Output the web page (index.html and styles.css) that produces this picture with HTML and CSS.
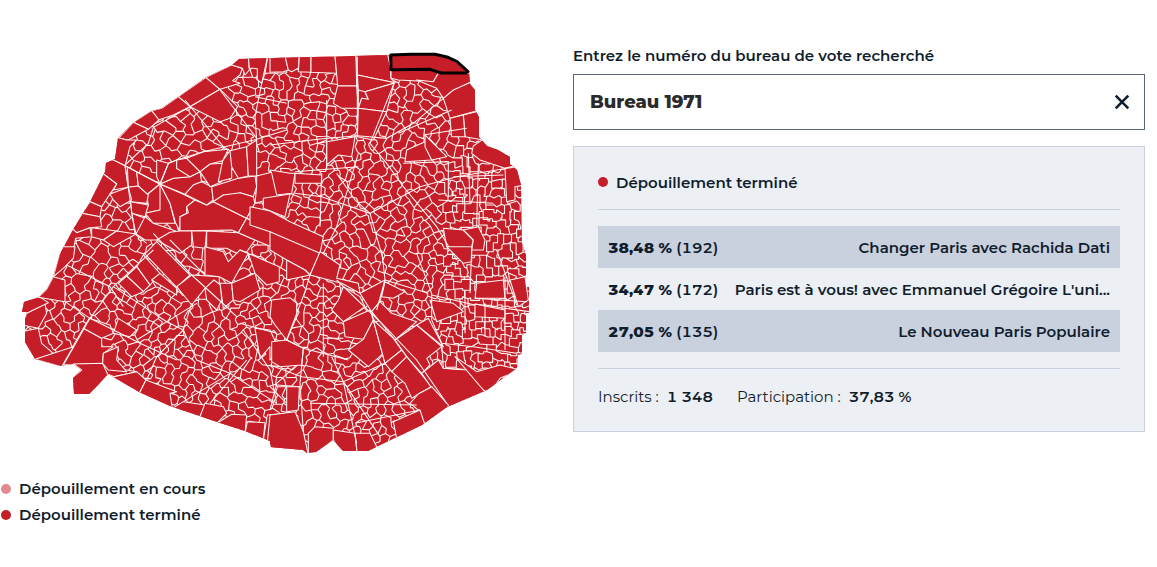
FILE: index.html
```html
<!DOCTYPE html>
<html lang="fr">
<head>
<meta charset="utf-8">
<title>Bureaux de vote</title>
<link rel="stylesheet" href="styles.css">
</head>
<body>
<main class="layout">
  <section class="map-column">
    <svg class="map" viewBox="0 0 540 470" aria-label="Carte des bureaux de vote de Paris">
      <defs><clipPath id="city"><path id="outline"/></clipPath></defs>
      <path id="land" class="land"/>
      <g clip-path="url(#city)">
        <path id="mesh" class="border"/>
        <g id="blocks"></g>
      </g>
      <path class="selected" d="M390.8 55 411 54.3 435 54.3 448 57.3 457 61.5 468 71.5 466 73 441 73 430 69.3 391 69.7Z"/>
    </svg>
    <ul class="legend">
      <li class="status"><i class="dot dot-light"></i><span>Dépouillement en cours</span></li>
      <li class="status"><i class="dot"></i><span>Dépouillement terminé</span></li>
    </ul>
  </section>
  <section class="panel">
    <label class="label" for="bureau">Entrez le numéro du bureau de vote recherché</label>
    <div class="field">
      <span class="value" id="bureau">Bureau 1971</span>
      <svg class="close" viewBox="0 0 16 16"><path d="M1.7 1.7 14.3 14.3M14.3 1.7 1.7 14.3"/></svg>
    </div>
    <div class="card">
      <div class="status head"><i class="dot"></i><span>Dépouillement terminé</span></div>
      <ul class="results">
        <li class="row"><span class="score"><b>38,48 %</b> (192)</span><span class="name">Changer Paris avec Rachida Dati</span></li>
        <li class="row"><span class="score"><b>34,47 %</b> (172)</span><span class="name">Paris est à vous! avec Emmanuel Grégoire L'uni...</span></li>
        <li class="row"><span class="score"><b>27,05 %</b> (135)</span><span class="name">Le Nouveau Paris Populaire</span></li>
      </ul>
      <div class="totals">
        <span class="total"><span>Inscrits :</span><b>1 348</b></span>
        <span class="total"><span>Participation :</span><b>37,83 %</b></span>
      </div>
    </div>
  </section>
</main>
<script src="map.js"></script>
</body>
</html>
```
FILE: styles.css
```css
* { box-sizing: border-box; }
body { margin: 0; background: #fff; color: #101d2c; font: 600 15px/20px Montserrat, Inter, sans-serif; }
ul { list-style: none; margin: 0; padding: 0; }
.layout { display: grid; grid-template-columns: 540px 572px; column-gap: 33px; height: 567px; }
.map { display: block; width: 540px; height: 470px; }
.land { fill: #c61e28; }
.border { fill: none; stroke: #fff4f4; stroke-width: 1.1; stroke-linejoin: round; }
.block { fill: #c61e28; stroke: #fff4f4; stroke-width: 3.2; stroke-linejoin: round; }
.road { fill: none; stroke: #fff4f4; stroke-width: 3.2; }
.selected { fill: none; stroke: #000; stroke-width: 3; stroke-linejoin: round; }
.legend { display: grid; gap: 6px; padding: 9px 0 0 1px; }
.status { display: flex; align-items: center; gap: 8px; white-space: nowrap; }
.dot { width: 10px; height: 10px; border-radius: 50%; background: #c61e28; }
.dot-light { background: #e28a90; }
.panel { padding-top: 46px; white-space: nowrap; }
.label { display: block; width: max-content; }
.field { display: flex; align-items: center; justify-content: space-between; height: 56px; margin-top: 8px; padding: 0 14px 0 16px; border: 1px solid #59657f; }
.value { font-size: 18px; font-weight: 800; color: #2b2b2b; }
.close { width: 16px; height: 16px; fill: none; stroke: #101d2c; stroke-width: 2.6; }
.card { height: 286px; margin-top: 16px; padding: 25px 24px; border: 1px solid #c9d1de; background: #eceff4; }
.head { padding-bottom: 17px; border-bottom: 1px solid #c9d1de; }
.head span { padding-top: 1px; margin-bottom: -1px; }
.results { padding: 16px 0; border-bottom: 1px solid #c9d1de; }
.row { display: flex; align-items: center; justify-content: space-between; height: 42px; padding: 1px 10px 0; }
.row:nth-child(odd) { background: #c9d0de; }
.score, .totals { font-variant-numeric: tabular-nums; }
.score b { font-weight: 800; }
.totals { display: flex; gap: 24px; padding-top: 18px; }
.total { display: flex; gap: 8px; font-weight: 400; }
.total b { font-weight: 600; }
```
FILE: map.js
```js
const outline = [[239,59],[232,65],[206,77],[178,97],[160,109],[151,111],[133,123],[118,138],[115,159],[106,163],[105,172],[90,202],[74,228],[60,254],[53,277],[47,289],[39,297],[24,302],[22,312],[27,312],[25,320],[25,342],[35,359],[60,366],[73,364],[81,370],[73,378],[74,394],[89,394],[98,385],[108,374],[139,392],[170,406],[217,422],[245,431],[270,441],[271,447],[303,450],[307,453],[316,452],[333,440],[343,451],[368,451],[422,425],[447,407],[487,390],[517,368],[518,355],[522,354],[522,335],[526,333],[526,313],[529,313],[529,287],[526,287],[526,255],[522,243],[521,185],[517,170],[510,164],[510,157],[498,150],[487,146],[479,137],[479,117],[475,110],[475,90],[470,84],[469,72],[457,61],[435,54],[391,55]];
const outlineD = 'M' + outline.map(p => p.join(' ')).join('L') + 'Z';
document.getElementById('outline').setAttribute('d', outlineD);
document.getElementById('land').setAttribute('d', outlineD);

let state = 1971;
function rnd() {
  state = (state * 1664525 + 1013904223) >>> 0;
  return state / 4294967296;
}

// Street grids of the city: centre x, centre y, direction in degrees, block size
const grids = [
  [170, 130, 35, 10], [90, 230, 30, 9.5], [200, 210, 15, 10.5], [290, 120, 8, 8], [290, 190, 15, 8],
  [400, 110, 30, 8.5], [370, 200, 60, 8], [430, 220, 55, 8], [490, 200, 0, 7.8], [490, 310, 0, 7.8],
  [70, 320, 55, 8.5], [130, 310, 38, 8], [200, 350, 30, 8], [240, 320, 65, 8], [300, 290, 25, 8],
  [280, 390, 12, 8.5], [380, 390, 65, 8], [330, 350, 15, 8.5], [400, 270, 35, 8.3]
];
const seeds = [];
grids.forEach((g, n) => {
  const [gx, gy, deg, size] = g, c = Math.cos(deg * Math.PI / 180), s = Math.sin(deg * Math.PI / 180);
  for (let u = -26; u <= 26; u++) {
    for (let v = -26; v <= 26; v++) {
      const a = (u + (rnd() - .5) * .62 + (v % 2) * .3) * size, b = (v + (rnd() - .5) * .62) * size;
      const x = gx + a * c - b * s, y = gy + a * s + b * c;
      if (x < 15 || x > 538 || y < 45 || y > 460) continue;
      const own = (x - gx) ** 2 + (y - gy) ** 2;
      if (grids.some((h, m) => m !== n && (x - h[0]) ** 2 + (y - h[1]) ** 2 < own)) continue;
      if (seeds.every(t => (t[0] - x) ** 2 + (t[1] - y) ** 2 > 14)) seeds.push([x, y]);
    }
  }
});

function cell(i) {
  const [sx, sy] = seeds[i];
  let poly = [[sx - 40, sy - 40, -1], [sx + 40, sy - 40, -1], [sx + 40, sy + 40, -1], [sx - 40, sy + 40, -1]];
  seeds.forEach(([tx, ty], j) => {
    const dx = tx - sx, dy = ty - sy;
    if (j === i || dx * dx + dy * dy > 2500) return;
    const c = (tx * tx + ty * ty - sx * sx - sy * sy) / 2;
    const out = [];
    poly.forEach((a, k) => {
      const b = poly[(k + 1) % poly.length];
      const da = a[0] * dx + a[1] * dy - c, db = b[0] * dx + b[1] * dy - c;
      const t = da / (da - db), m = [a[0] + (b[0] - a[0]) * t, a[1] + (b[1] - a[1]) * t];
      if (da <= 0) {
        out.push(a);
        if (db > 0) out.push([m[0], m[1], j]);
      } else if (db <= 0) out.push([m[0], m[1], a[2]]);
    });
    poly = out;
  });
  return poly;
}

// A precinct is made of two or three neighbouring building blocks
const cells = seeds.map((s, i) => cell(i));
const group = seeds.map(() => -1);
cells.forEach((poly, i) => {
  if (group[i] >= 0) return;
  group[i] = i;
  let from = poly;
  const extra = rnd() < .3 ? 2 : 1;
  for (let n = 0; n < extra; n++) {
    const free = from.map(v => v[2]).filter(j => j >= 0 && group[j] < 0);
    if (!free.length) break;
    const pick = free[Math.floor(rnd() * free.length)];
    group[pick] = i;
    from = cells[pick];
  }
});

let mesh = '';
cells.forEach((poly, i) => {
  const s = seeds[i];
  poly.forEach((a, k) => {
    const b = poly[(k + 1) % poly.length];
    if (a[2] < i || group[a[2]] === group[i]) return;
    const len = Math.hypot(b[0] - a[0], b[1] - a[1]);
    const p = v => v[0].toFixed(1) + ' ' + v[1].toFixed(1);
    let mid = '';
    if (s[0] > 445 && s[1] > 150 && rnd() < .6) mid = 'L' + p(rnd() < .5 ? [a[0], b[1]] : [b[0], a[1]]);
    else if (len > 6 && rnd() < .15) {
      mid = 'L' + p([(a[0] + b[0]) / 2 + (rnd() - .5) * 5, (a[1] + b[1]) / 2 + (rnd() - .5) * 5]);
    }
    mesh += 'M' + p(a) + mid + 'L' + p(b);
  });
});
document.getElementById('mesh').setAttribute('d', mesh);

// Larger precincts and avenues, by quarter, three units to the pixel
const quarters = [
  { at: [10, 40], blocks: [
    '588,112 630,148 540,200 505,170', '588,112 665,75 697,85 690,105 668,122 690,130 630,148',
    '688,50 715,50 718,90 705,105 697,85 665,75', '715,50 773,50 765,100 755,130 742,118 742,86 718,84',
    '773,50 830,50 830,98 765,100', '505,170 540,200 490,225 445,240 425,212 455,205',
    '370,247 425,212 447,240 415,268', '325,295 370,247 415,268 355,300',
    '305,358 315,290 350,300 380,300 360,320 350,360 345,377', '285,360 310,360 345,377 355,442 310,450 320,432 275,398',
    '275,398 320,432 300,462 275,500 230,480', '240,485 275,500 270,530 215,520',
    '215,520 270,530 275,560 240,563 200,578 180,560', '180,560 200,578 240,563 245,590 197,595 185,655 140,655',
    '540,200 630,148 683,200 660,235 630,245', '352,380 380,395 385,438 355,442',
    '380,395 450,432 410,465 385,438', '450,432 410,465 415,495 405,520 450,510 480,490',
    '450,432 480,490 495,550 430,550 405,520 450,510', '355,442 385,438 415,465 410,490 362,485',
    '362,485 415,495 405,530 365,520', '365,520 405,535 400,560 378,582',
    '450,432 520,463 555,480 530,500 530,520 510,530 510,573 497,550 480,490',
    '555,480 590,495 610,485 710,535 685,578 665,570 510,573 510,530 535,518 530,500',
    '450,432 490,415 540,410 570,395 575,425 550,435 525,463', '575,425 605,440 610,480 590,495 525,463 550,435',
    '605,440 685,415 735,408 740,440 730,470 690,458 660,470 640,465 610,485',
    '450,432 475,370 500,360 500,385 540,410 490,415', '500,360 530,355 570,395 540,410 500,385',
    '570,395 600,372 638,370 635,425 600,440', '638,362 660,332 690,350 665,385 665,415 625,425',
    '450,432 475,370 440,360 440,410', '740,408 790,395 808,470 735,490 740,440',
    '660,332 710,320 715,408 685,415 665,380', '710,320 740,300 740,408 715,408',
    '610,485 640,465 690,458 730,470 735,490 710,535', '530,355 580,335 655,328 638,362 600,372 570,395',
    '378,582 405,600 440,600 497,573 430,550 405,530', '510,573 545,573 545,615 510,640 440,600 480,577',
    '545,573 590,573 585,625 550,620', '590,573 685,578 735,600 700,650 650,625 590,625',
    '710,535 830,590 830,640 735,600 685,578', '735,490 755,488 778,520 778,560 710,535',
    '245,563 320,573 280,600 245,590', '300,462 355,442 365,480 330,500 310,480', '320,573 378,582 310,620 280,600'
  ], roads: ['345,375 375,582 410,610', '345,375 415,310 430,262 540,200', '345,377 450,432 475,370 500,360 580,335 740,298 830,270',
    '525,180 640,320 660,332', '740,300 735,230 755,130 773,50', '630,150 740,295', '735,170 830,190'] },
  { at: [270, 40], blocks: [
    '0,48 45,48 55,90 40,95 0,97', '45,48 88,48 85,85 65,95 55,90', '88,48 123,48 123,97 85,95',
    '123,48 195,48 200,100 123,97', '195,48 258,46 260,138 203,137', '203,137 260,138 265,205 215,205 190,190',
    '258,46 360,40 363,115 375,128 262,105', '262,105 375,128 285,155 270,180 265,150',
    '265,150 285,155 295,178 275,175 265,205', '285,155 372,130 350,215 265,205 275,175 295,178', '350,30 500,30 605,95 605,102 505,100 480,88 363,90',
    '363,90 480,88 505,100 490,125 385,120 363,115',
    '505,100 610,100 605,125 545,155 520,175 500,145 440,120 490,125', '605,125 630,120 630,210 540,235 520,175 550,150',
    '580,225 640,210 640,300 585,290', '540,235 580,225 585,290 545,290',
    '610,318 650,290 730,325 750,378 705,385 630,360 605,340', '705,385 760,370 765,435 735,440 735,480 710,485',
    '145,310 255,290 245,350 205,345 170,375 170,300', '265,205 350,215 310,300 262,290',
    '5,400 0,390 60,400 75,400 65,460 20,465', '-20,475 60,462 45,530 -20,505',
    '75,400 155,405 155,430 75,430', '-60,500 0,513 60,545 160,590 150,640 100,640 0,575 -60,555',
    '520,565 580,570 610,600 600,640 575,660 530,620', '410,330 465,305 485,360 405,365',
    '465,285 530,350 485,360 465,320', '580,570 625,560 645,600 640,630 605,630 610,600'
  ], roads: ['0,315 150,297 262,287 350,295 430,250 520,175', '262,50 262,290', '300,310 350,370 400,440 500,560 560,660',
    '75,395 265,380', '155,400 150,560', '155,470 300,520 450,440 560,410 740,380', '75,460 155,470', '265,340 200,560 150,660',
    '300,520 340,660', '300,520 255,480 200,400', '372,130 300,310', '385,280 545,210', '460,285 590,265', '400,370 535,365 535,470', '550,410 700,405', '595,340 600,490', '625,370 620,560', '170,180 170,390', '505,480 670,490'] },
  { at: [10, 250], blocks: [
    '160,340 220,235 275,265 275,290 310,290 280,310 278,340 155,345', '220,235 238,205 300,225 310,250 275,265',
    '190,342 278,340 300,373 238,445 185,440 185,385 215,360', '35,245 85,235 95,280 130,310 75,335 35,275',
    '35,225 50,190 105,160 110,190 85,235', '30,155 88,140 115,158 50,190 30,188',
    '75,328 130,310 190,290 155,350', '278,340 295,350 380,365 310,380 293,373', '280,310 325,290 320,330 350,365 295,360 278,340',
    '293,373 312,380 380,365 408,390 388,430', '388,430 408,390 500,425 480,430 487,475',
    '487,475 520,455 585,465 570,500', '570,500 585,460 640,470 650,490 620,520', '620,520 665,493 710,495 705,550',
    '705,550 712,515 765,518 760,570', '760,570 772,495 830,490 830,600 770,595', '400,15 450,70 420,105 380,50',
    '450,70 500,115 500,135 425,90', '405,12 440,-25 540,75 500,112', '350,78 380,50 420,105 400,125',
    '545,75 628,80 628,100 585,115 545,165 500,110', '585,115 612,90 632,105 635,150 620,180 590,150',
    '630,100 665,100 670,150 640,175', '585,-10 640,5 655,35 690,0 715,10 665,100 628,80 585,75',
    '665,100 735,70 750,120 690,155 670,150', '690,0 808,50 808,95 770,105 735,70 715,10',
    '735,235 780,240 808,300 780,330 780,290 750,325', '310,250 325,205 380,240 360,260',
    '155,-10 195,-10 190,25 160,55 130,80',
    '325,100 350,78 400,125 365,140', '130,80 165,90 165,155 85,142 110,118'
  ], roads: ['430,0 310,110 240,205 160,345', '240,205 390,280 500,330', '430,-50 545,75 660,180', '545,160 520,240 560,330 660,370 800,460',
    '310,110 470,215 520,240', '170,45 300,110 340,170', '480,-30 585,75', '165,155 240,205', '700,240 780,360 800,460', '600,460 710,330', '380,270 560,160', '410,390 440,320 520,240', '520,455 660,370', '800,250 690,220'] },
  { at: [270, 250], blocks: [
    '5,150 60,143 80,160 80,200 50,270 15,225 0,200', '0,-55 150,10 120,75 105,60 50,30 0,0',
    '120,75 150,5 210,45 200,85 265,100 270,130 215,100', '120,75 50,90 50,30 105,60',
    '220,110 270,140 285,170 220,215 185,180 205,150', '270,130 345,90 330,155 305,185',
    '305,185 330,155 365,190 440,215 375,270', '375,270 440,225 515,290 470,325 480,345 455,370 410,320',
    '440,225 475,205 520,290', '300,180 310,210 280,268 225,260 220,215', '310,210 345,340 340,310 295,350 235,300 280,268',
    '310,210 370,265 395,300 345,340', '395,300 410,320 365,365 345,340', '410,320 485,410 445,432 425,445 405,400 365,365',
    '455,370 505,330 520,355 555,358 595,360 650,430 530,480', '485,410 535,465 530,490 465,525 445,480 420,460 445,432',
    '555,320 620,365 690,345 750,360 690,385 660,430 640,420', '0,495 75,485 100,545 115,615 -10,600',
    '115,550 135,530 190,535 190,570 138,615 115,615', '190,540 255,550 262,615 220,615 190,570',
    '262,615 255,550 300,550 325,600', '465,525 450,480 370,515 380,565', '5,275 50,270 100,295 95,345 30,350 5,335',
    '620,100 700,90 705,145 615,145', '530,-10 605,-10 605,35 580,40', '50,410 88,410 85,480 50,485',
    '345,95 405,125 370,145 335,140',
    '480,150 550,160 580,185 500,215', '615,162 705,180 705,205 615,200', '720,90 765,80 775,150 745,170'
  ], roads: ['120,75 105,125 50,270', '200,90 345,230 440,330 530,460', '50,270 100,295 235,330', '100,295 90,400 100,545',
    '0,345 95,380 220,395 345,340', '185,320 220,395 260,580', '0,480 20,400 75,350', '20,405 90,410', '335,0 345,90 320,180', '440,10 485,130 485,210 515,280',
    '475,130 345,90', '605,0 600,130', '615,145 770,155', '615,162 778,185', '680,0 740,165', '645,160 645,260', '705,80 705,300', '515,280 610,290 740,310', '515,280 520,355 580,358',
    '220,395 330,560', '160,100 160,320', '160,265 220,265', '120,460 440,465', '255,520 450,480', '0,410 50,460', '585,120 585,250', '485,135 615,165'] }
];
const NS = 'http://www.w3.org/2000/svg';
const holder = document.getElementById('blocks');
function add(parent, tag, cls, points) {
  const el = document.createElementNS(NS, tag);
  el.setAttribute('class', cls);
  el.setAttribute('points', points);
  parent.appendChild(el);
}
quarters.forEach(q => {
  const g = document.createElementNS(NS, 'g');
  g.setAttribute('transform', `translate(${q.at[0]} ${q.at[1]}) scale(.33333)`);
  q.blocks.forEach(b => add(g, 'polygon', 'block', b));
  q.roads.forEach(r => add(g, 'polyline', 'road', r));
  holder.appendChild(g);
});
```
